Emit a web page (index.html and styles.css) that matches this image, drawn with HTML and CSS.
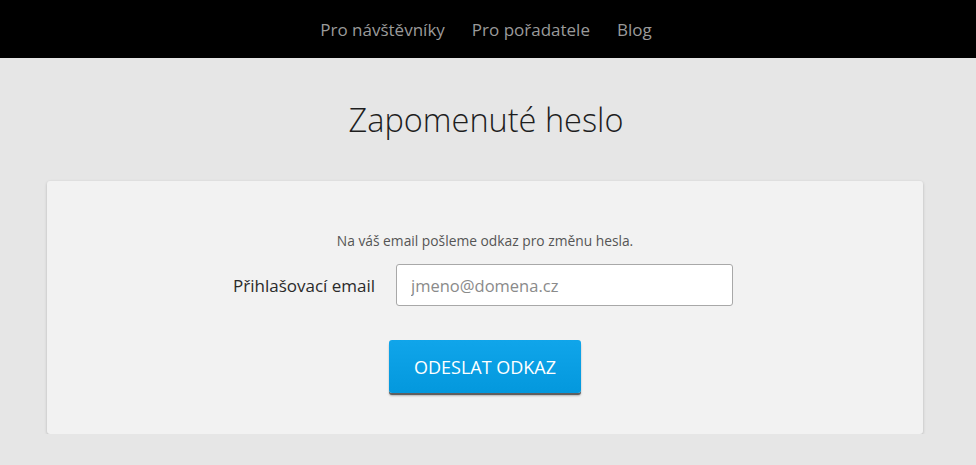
FILE: index.html
```html
<!DOCTYPE html>
<html lang="cs">
<head>
<meta charset="utf-8">
<title>Zapomenuté heslo</title>
<link rel="stylesheet" href="styles.css">
</head>
<body>
<header class="topbar">
  <nav class="nav">
    <a href="#" class="nav-link">Pro návštěvníky</a>
    <a href="#" class="nav-link">Pro pořadatele</a>
    <a href="#" class="nav-link">Blog</a>
  </nav>
</header>
<main class="main">
  <h1 class="title">Zapomenuté heslo</h1>
  <section class="card">
    <p class="hint">Na váš email pošleme odkaz pro změnu hesla.</p>
    <div class="row">
      <label class="label" for="email">Přihlašovací email</label>
      <input class="input" id="email" type="email" placeholder="jmeno@domena.cz">
    </div>
    <div class="actions">
      <button class="btn" type="button">ODESLAT ODKAZ</button>
    </div>
  </section>
</main>
</body>
</html>
```
FILE: styles.css
```css
* { box-sizing: border-box; }
html, body { margin: 0; padding: 0; }
body {
  background: #e6e6e6;
  font-family: "Open Sans", "Liberation Sans", sans-serif;
  color: #222;
}
.topbar {
  background: #000;
  height: 58px;
  display: flex;
  justify-content: center;
  align-items: center;
}
.nav {
  display: flex;
  gap: 27px;
  padding-right: 4px;
  padding-top: 1px;
}
.nav-link {
  color: #9a9a9a;
  text-decoration: none;
  font-size: 17px;
}
.main {
  padding: 40px 47px 0 47px;
}
.title {
  margin: 0 0 39px 0;
  text-align: center;
  font-size: 32.5px;
  font-weight: 300;
  line-height: 44px;
  color: #1e1e1e;
  padding-right: 4px;
}
.card {
  background: #f2f2f2;
  border-radius: 3px;
  box-shadow: 0 1px 3px rgba(0,0,0,0.22);
  padding: 51px 4px 38px 0;
  width: 876px;
  height: 253px;
}
.hint {
  margin: 0 0 14px 0;
  text-align: center;
  font-size: 13.8px;
  color: #555;
  line-height: 18px;
  padding-left: 4px;
}
.row {
  display: flex;
  justify-content: center;
  align-items: center;
  gap: 23px;
}
.label {
  font-size: 17px;
  color: #2a2a2a;
  width: 140px;
  text-align: right;
  white-space: nowrap;
}
.input {
  width: 337px;
  height: 42px;
  border: 1px solid #a8a8a8;
  border-radius: 3px;
  background: #fff;
  padding: 0 14px;
  font-family: inherit;
  font-size: 16.5px;
  color: #333;
}
.input::placeholder { color: #8a8a8a; }
.actions {
  display: flex;
  justify-content: center;
  margin-top: 34px;
  padding-left: 4px;
}
.btn {
  width: 192px;
  height: 53px;
  border: 0;
  border-radius: 3px;
  background: linear-gradient(#10a5ea, #0398dd);
  box-shadow: 0 2px 0 #5f5f5f, 0 3px 2px rgba(0,0,0,0.25);
  color: #fff;
  font-family: inherit;
  font-size: 18px;
  cursor: pointer;
}
```
